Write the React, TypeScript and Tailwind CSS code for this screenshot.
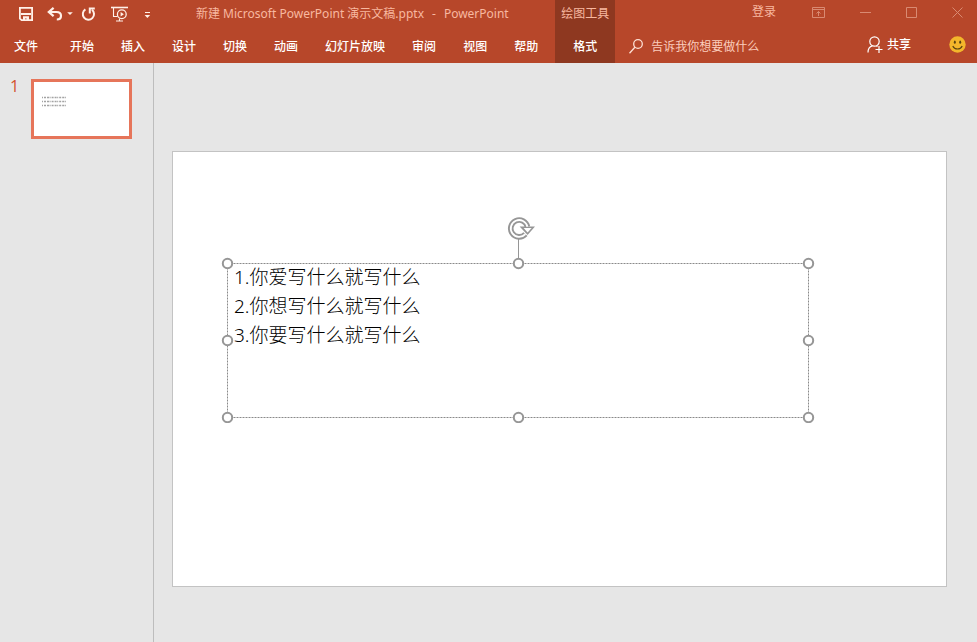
import { clsx } from "clsx";

const tabs = [
  "文件",
  "开始",
  "插入",
  "设计",
  "切换",
  "动画",
  "幻灯片放映",
  "审阅",
  "视图",
  "帮助",
];

const lines = ["1.你爱写什么就写什么", "2.你想写什么就写什么", "3.你要写什么就写什么"];

function QuickAccess() {
  return (
    <div className="flex items-center text-[#fff0e8]">
      <button type="button" aria-label="保存">
        <svg width="14" height="14" viewBox="0 0 14 14" fill="none">
          <path d="M.9.9h12.2v12.2H2.6L.9 11.6z" stroke="currentColor" strokeWidth="1.8" />
          <path d="M2 7h10" stroke="currentColor" strokeWidth="2" />
          <path d="M4 9.2h6V13H7.6v-1.6H6V13H4z" fill="currentColor" />
        </svg>
      </button>
      <button type="button" aria-label="撤消" className="ml-3.5">
        <svg width="16" height="14" viewBox="0 0 16 14" fill="none">
          <path d="M6.6.8 1.8 5l4.8 4.2M2 5h7.4c3 0 4.6 1.6 4.6 3.7 0 2.3-1.7 3.8-4.2 3.8" stroke="currentColor" strokeWidth="2.2" />
        </svg>
      </button>
      <button type="button" aria-label="撤消选项" className="ml-1">
        <svg width="6" height="14" viewBox="0 0 6 14">
          <path d="M.2 5.2h5.6L3 8z" fill="currentColor" />
        </svg>
      </button>
      <button type="button" aria-label="重复" className="ml-2">
        <svg width="15" height="15" viewBox="0 0 15 15" fill="none">
          <path d="M4.4 2.4A5.6 5.6 0 1 0 11 2.8" stroke="currentColor" strokeWidth="2" />
          <path d="M8.8 6.6V1.6h5" stroke="currentColor" strokeWidth="2" />
        </svg>
      </button>
      <button type="button" aria-label="从头开始放映" className="ml-[15px]">
        <svg width="17" height="16" viewBox="0 0 17 16" fill="none" stroke="currentColor">
          <path d="M0 1.5h17" strokeWidth="1.6" />
          <path d="M2.5 2v8.5h4M5 15h7M8.5 12.5V15" strokeWidth="1.1" />
          <circle cx="10.8" cy="8.3" r="4.4" strokeWidth="1.3" />
          <path d="M9.6 6v4.6l3.3-2.3z" fill="currentColor" stroke="none" />
        </svg>
      </button>
      <button type="button" aria-label="自定义快速访问工具栏" className="ml-4">
        <svg width="7" height="14" viewBox="0 0 7 14">
          <path d="M1 5.5h5" stroke="currentColor" />
          <path d="M.6 8h5.6L3.4 11z" fill="currentColor" />
        </svg>
      </button>
    </div>
  );
}

function Header() {
  return (
    <header className="flex h-[63px] w-full bg-[#b7472a] text-xs text-white">
      <div className="flex shrink-0 flex-col">
        <div className="flex h-7 items-center pl-[19px]">
          <QuickAccess />
          <h1 className="ml-[45px] flex gap-2 font-['Noto_Sans','Noto_Sans_CJK_SC',sans-serif] whitespace-nowrap text-[#f8b8a0]">
            <span>新建 Microsoft PowerPoint 演示文稿.pptx</span>
            <span>-</span>
            <span>PowerPoint</span>
          </h1>
        </div>
        <nav className="flex flex-1 items-center gap-[27px] pt-0.5 pr-[17px] pl-3.5">
          {tabs.map((tab, i) => (
            <button key={tab} type="button" className={clsx("font-medium", i === 0 && "mr-[5px]")}>
              {tab}
            </button>
          ))}
        </nav>
      </div>
      <div className="flex w-15 shrink-0 flex-col items-center bg-[#8e3820]">
        <span className="flex h-7 items-center text-[#f8b8a0]">绘图工具</span>
        <button type="button" className="flex-1 pt-0.5 font-medium">
          格式
        </button>
      </div>
      <div className="flex min-w-0 flex-1 flex-col">
        <div className="flex h-6 items-center justify-end pr-3.5 text-[#d98a72]">
          <button type="button" className="text-[#f8b8a0]">
            登录
          </button>
          <button type="button" aria-label="功能区显示选项" className="ml-9">
            <svg width="13" height="11" viewBox="0 0 13 11" fill="none" stroke="currentColor">
              <path d="M.5.5h12v10H.5zM.5 2.5h12M6.5 9V4.5M4.5 6.5l2-2 2 2" />
            </svg>
          </button>
          <button type="button" aria-label="最小化" className="ml-[35px]">
            <svg width="11" height="11" viewBox="0 0 11 11" stroke="currentColor">
              <path d="M0 5.5h11" />
            </svg>
          </button>
          <button type="button" aria-label="最大化" className="ml-[35px]">
            <svg width="11" height="11" viewBox="0 0 11 11" fill="none" stroke="currentColor">
              <path d="M.5.5h10v10H.5z" />
            </svg>
          </button>
          <button type="button" aria-label="关闭" className="ml-[35px]">
            <svg width="11" height="11" viewBox="0 0 11 11" stroke="currentColor">
              <path d="m.5.5 10 10M10.5.5l-10 10" />
            </svg>
          </button>
        </div>
        <div className="flex flex-1 items-center pt-0.5 pr-[11px] pl-3.5">
          <label className="flex min-w-0 flex-1 items-center gap-2 pt-1">
            <svg width="14" height="15" viewBox="0 0 14 15" fill="none" stroke="#fde0d4" strokeWidth="1.3">
              <circle cx="9" cy="5" r="4.3" />
              <path d="m5.9 8.2-5.4 6" />
            </svg>
            <input
              type="text"
              aria-label="告诉我你想要做什么"
              placeholder="告诉我你想要做什么"
              className="min-w-0 flex-1 bg-transparent outline-none placeholder:text-[#fbcdbd]"
            />
          </label>
          <button type="button" className="flex items-center gap-1 font-medium">
            <svg width="16" height="17" viewBox="0 0 16 17" fill="none" stroke="currentColor" strokeWidth="1.2">
              <circle cx="7.5" cy="5.5" r="4.7" />
              <path d="M1 16.5c0-3.6 1.6-5.8 4.3-6.6M9.4 9.7l1.1.7M8.5 13.5h7M12 10v7" />
            </svg>
            共享
          </button>
          <button type="button" aria-label="反馈" className="ml-[38px]">
            <svg width="17" height="17" viewBox="0 0 17 17">
              <circle cx="8.5" cy="8.5" r="8.2" fill="#f3b62b" />
              <ellipse cx="5.8" cy="6.2" rx="1" ry="1.6" fill="#5b4410" />
              <ellipse cx="11.2" cy="6.2" rx="1" ry="1.6" fill="#5b4410" />
              <path d="M3.8 10c1.8 4 7.6 4 9.4 0" fill="none" stroke="#5b4410" strokeWidth="1.2" />
            </svg>
          </button>
        </div>
      </div>
    </header>
  );
}

function Thumbnails() {
  return (
    <aside className="flex w-[154px] shrink-0 items-start border-r border-[#bdbdbd] pt-4 pl-2.5">
      <span className="w-[21px] text-base leading-3.5 text-[#d35230]">1</span>
      <button type="button" aria-label="幻灯片 1" className="h-15 w-[101px] border-3 border-[#e6755a] bg-white">
        <svg width="95" height="54" viewBox="0 0 95 54" className="block" stroke="#a3a3a3">
          <path d="M8 15.5h24M8 19.5h24M8 23.5h24" strokeWidth="1.6" strokeDasharray="1 1 2 1 2 .6" />
        </svg>
      </button>
    </aside>
  );
}

const handles = [
  [6, 6],
  [297, 6],
  [587, 6],
  [6, 83],
  [587, 83],
  [6, 160],
  [297, 160],
  [587, 160],
];

function SelectionFrame() {
  return (
    <svg
      width="594"
      height="206"
      viewBox="0 -40 594 206"
      fill="none"
      className="pointer-events-none absolute -top-[46px] -left-1.5"
    >
      <path d="M6.5 6.5h581v154h-581z" stroke="#8a8a8a" strokeDasharray="2 1" />
      <path d="M297.5 6V-19" stroke="#969696" />
      {/* rotate handle */}
      <g transform="translate(1 -1)">
        <path d="M305.4-29.2A8.4 8.4 0 1 0 303.4-21.9" stroke="#969696" strokeWidth="5.6" />
        <path d="M297.6-29.6h15.4l-7.4 8.6z" fill="#969696" />
        <path d="M305.4-29.2A8.4 8.4 0 1 0 303.4-21.9" stroke="#fff" strokeWidth="1.8" />
        <path d="M301.6-28h8l-4 4.6z" fill="#fff" />
      </g>
      {handles.map(([x, y]) => (
        <circle key={`${x}-${y}`} cx={x + 0.5} cy={y + 0.5} r="4.7" fill="#fff" stroke="#969696" strokeWidth="2" />
      ))}
    </svg>
  );
}

function Slide() {
  return (
    <section className="relative aspect-video w-full border border-[#c3c3c3] bg-white">
      <div className="absolute top-[111px] left-[54px] h-[155px] w-[582px] pl-[7px] font-['Noto_Sans','Noto_Sans_CJK_SC',sans-serif] text-[19px] leading-[29px] font-light text-black">
        {lines.map((line) => (
          <p key={line}>{line}</p>
        ))}
        <SelectionFrame />
      </div>
    </section>
  );
}

export default function App() {
  return (
    <div className="flex min-h-screen flex-col bg-[#e6e6e6] font-['Open_Sans','Noto_Sans_CJK_SC',sans-serif]">
      <Header />
      <div className="flex flex-1">
        <Thumbnails />
        <main className="min-w-0 flex-1 pt-[88px] pr-[30px] pb-8 pl-[18px]">
          <Slide />
        </main>
      </div>
    </div>
  );
}
